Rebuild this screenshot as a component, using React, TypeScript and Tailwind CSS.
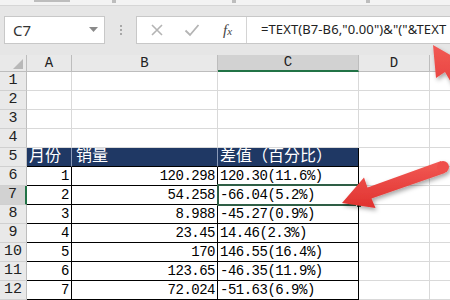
import React from 'react';

const MONO = { fontFamily: '"Liberation Mono", "Noto Sans CJK SC", monospace' };
const SANS = { fontFamily: '"Noto Sans", "Noto Sans CJK SC", sans-serif' };

const rows = [
  { n: 6, a: '1', b: '120.298', c: '120.30(11.6%)' },
  { n: 7, a: '2', b: '54.258', c: '-66.04(5.2%)' },
  { n: 8, a: '3', b: '8.988', c: '-45.27(0.9%)' },
  { n: 9, a: '4', b: '23.45', c: '14.46(2.3%)' },
  { n: 10, a: '5', b: '170', c: '146.55(16.4%)' },
  { n: 11, a: '6', b: '123.65', c: '-46.35(11.9%)' },
  { n: 12, a: '7', b: '72.024', c: '-51.63(6.9%)' },
];

const RowHead: React.FC<{ n: number; active?: boolean }> = ({ n, active }) => (
  <div
    className={`w-[27px] shrink-0 flex items-center justify-center text-[15px] text-[#222] border-b border-[#d0d0d0] ${
      active ? 'bg-[#d2d2d2] border-r-2 border-r-[#217346]' : 'bg-[#e9e9e9] border-r border-r-[#bdbdbd]'
    }`}
    style={MONO}
  >
    {n}
  </div>
);

const EmptyRow: React.FC<{ n: number }> = ({ n }) => (
  <div className="flex h-[19px]">
    <RowHead n={n} />
    <div className="w-[45px] shrink-0 border-r border-b border-[#d9d9d9]" />
    <div className="w-[146px] shrink-0 border-r border-b border-[#d9d9d9]" />
    <div className="w-[141px] shrink-0 border-r border-b border-[#d9d9d9]" />
    <div className="w-[71px] shrink-0 border-r border-b border-[#d9d9d9]" />
    <div className="flex-1 border-b border-[#d9d9d9]" />
  </div>
);

const App: React.FC = () => {
  return (
    <div className="relative w-[450px] h-[300px] overflow-hidden bg-white select-none">
      {/* ribbon remnant: bottoms of group labels */}
      <div className="h-[6px] bg-[#f3f3f3] border-b border-[#d6d6d6] flex items-start">
        <div className="ml-[34px] w-[36px] h-[2px] bg-[#9a9a9a] opacity-60" />
        <div className="ml-[42px] w-[4px] h-[3px] bg-[#9a9a9a] opacity-60" />
        <div className="ml-[116px] w-[4px] h-[3px] bg-[#9a9a9a] opacity-60" />
        <div className="ml-[130px] w-[4px] h-[3px] bg-[#9a9a9a] opacity-60" />
      </div>

      {/* formula bar */}
      <div className="h-[49px] bg-[#e6e6e6] flex items-start pt-[10px] pl-[4px]">
        <div className="w-[101px] shrink-0 h-[28px] bg-white border border-[#c8c8c8] flex items-center pl-[8px] pr-[6px]">
          <span className="text-[15px] text-[#333] flex-1" style={SANS}>C7</span>
          <svg width="9" height="6" viewBox="0 0 9 6">
            <path d="M0 0 L9 0 L4.5 5 Z" fill="#8a8a8a" />
          </svg>
        </div>
        <div className="w-[31px] shrink-0 h-[28px] flex flex-col items-center justify-center gap-[2px]">
          <div className="w-[2px] h-[2px] bg-[#a8a8a8]" />
          <div className="w-[2px] h-[2px] bg-[#a8a8a8]" />
          <div className="w-[2px] h-[2px] bg-[#a8a8a8]" />
        </div>
        <div className="flex-1 min-w-0 overflow-hidden h-[28px] bg-white border border-r-0 border-[#c8c8c8] flex items-center">
          <div className="w-[110px] shrink-0 h-full flex items-center border-r border-[#d4d4d4]">
            <svg width="14" height="14" viewBox="0 0 14 14" className="ml-[13px]">
              <path d="M2 2 L12 12 M12 2 L2 12" stroke="#b4b4b4" strokeWidth="1.6" />
            </svg>
            <svg width="16" height="14" viewBox="0 0 16 14" className="ml-[20px]">
              <path d="M1.5 7.5 L6 12 L14.5 2" stroke="#b4b4b4" strokeWidth="1.8" fill="none" />
            </svg>
            <span className="ml-[23px] text-[15px] italic text-[#444]" style={{ fontFamily: '"Liberation Serif", serif' }}>
              f<span className="text-[11px]">x</span>
            </span>
          </div>
          <span className="ml-[14px] text-[13px] tracking-[0.1px] text-[#222] whitespace-nowrap" style={SANS}>
            =TEXT(B7-B6,"0.00")&amp;"("&amp;TEXT
          </span>
        </div>
      </div>

      {/* column headers */}
      <div className="flex h-[17px] bg-[#e9e9e9] text-[14px] text-[#222]" style={MONO}>
        <div className="w-[27px] shrink-0 border-r border-b border-[#bdbdbd] relative">
          <svg width="10" height="10" viewBox="0 0 10 10" className="absolute right-[3px] bottom-[2px]">
            <path d="M10 0 L10 10 L0 10 Z" fill="#b8b8b8" />
          </svg>
        </div>
        <div className="w-[45px] shrink-0 border-r border-b border-[#bdbdbd] flex items-center justify-center">A</div>
        <div className="w-[146px] shrink-0 border-r border-b border-[#bdbdbd] flex items-center justify-center">B</div>
        <div className="w-[141px] shrink-0 border-r border-[#bdbdbd] border-b-2 border-b-[#217346] bg-[#d2d2d2] flex items-center justify-center">C</div>
        <div className="w-[71px] shrink-0 border-r border-b border-[#bdbdbd] flex items-center justify-center">D</div>
        <div className="flex-1 border-b border-[#bdbdbd]" />
      </div>

      {[1, 2, 3, 4].map((n) => (
        <EmptyRow key={n} n={n} />
      ))}

      {/* table header row */}
      <div className="flex h-[19px]">
        <RowHead n={5} />
        <div className="w-[45px] shrink-0 bg-[#1f3864] border-r border-[#8a9ab8] border-b border-b-black text-white text-[16px] leading-[18px] pl-[2px]" style={MONO}>月份</div>
        <div className="w-[146px] shrink-0 bg-[#1f3864] border-r border-[#8a9ab8] border-b border-b-black text-white text-[16px] leading-[18px] pl-[4px]" style={MONO}>销量</div>
        <div className="w-[141px] shrink-0 bg-[#1f3864] border-r border-r-black border-b border-b-black text-white text-[16px] leading-[18px] pl-[2px] whitespace-nowrap" style={MONO}>差值（百分比）</div>
        <div className="w-[71px] shrink-0 border-r border-b border-[#d9d9d9]" />
        <div className="flex-1 border-b border-[#d9d9d9]" />
      </div>

      {rows.map((r) => {
        const active = r.n === 7;
        return (
          <div key={r.n} className="flex h-[19px]">
            <RowHead n={r.n} active={active} />
            <div className="w-[45px] shrink-0 border-r border-b border-black text-[14px] tracking-[-0.5px] text-right pr-[2px] leading-[18px]" style={MONO}>{r.a}</div>
            <div className="w-[146px] shrink-0 border-r border-b border-black text-[14px] tracking-[-0.5px] text-right pr-[2px] leading-[18px]" style={MONO}>{r.b}</div>
            <div className="w-[141px] shrink-0 border-r border-b border-black text-[14px] tracking-[-0.5px] pl-[2px] leading-[18px] whitespace-nowrap relative" style={MONO}>
              {r.c}
              {active && (
                <>
                  <div className="absolute -left-[1px] -top-[2px] -right-[2px] -bottom-[2px] border-2 border-[#2e5e45]" />
                  <div className="absolute -right-[4px] -bottom-[4px] w-[6px] h-[6px] bg-[#2e5e45] border border-white" />
                </>
              )}
            </div>
            <div className="w-[71px] shrink-0 border-r border-b border-[#d9d9d9]" />
            <div className="flex-1 border-b border-[#d9d9d9]" />
          </div>
        );
      })}

      {/* red arrows */}
      <svg className="absolute inset-0 pointer-events-none" width="450" height="300" viewBox="0 0 450 300">
        <defs>
          <filter id="sh" x="-20%" y="-20%" width="140%" height="140%">
            <feDropShadow dx="1.5" dy="2.5" stdDeviation="2" floodColor="#000" floodOpacity="0.35" />
          </filter>
          <linearGradient id="rg" x1="0" y1="0" x2="0" y2="1">
            <stop offset="0" stopColor="#f25a55" />
            <stop offset="1" stopColor="#e0322f" />
          </linearGradient>
        </defs>
        <g filter="url(#sh)">
          <polygon
            points="342,203 364,177.5 367.5,187.5 441,161 445,173 371.5,198.5 375.5,208"
            fill="url(#rg)"
          />
          <circle cx="443" cy="167" r="6" fill="#ef4f4b" />
          <polygon points="433,45 461,61 455,66 480,110 470,115 445,72 436,78" fill="url(#rg)" />
        </g>
      </svg>
    </div>
  );
};

export default App;
